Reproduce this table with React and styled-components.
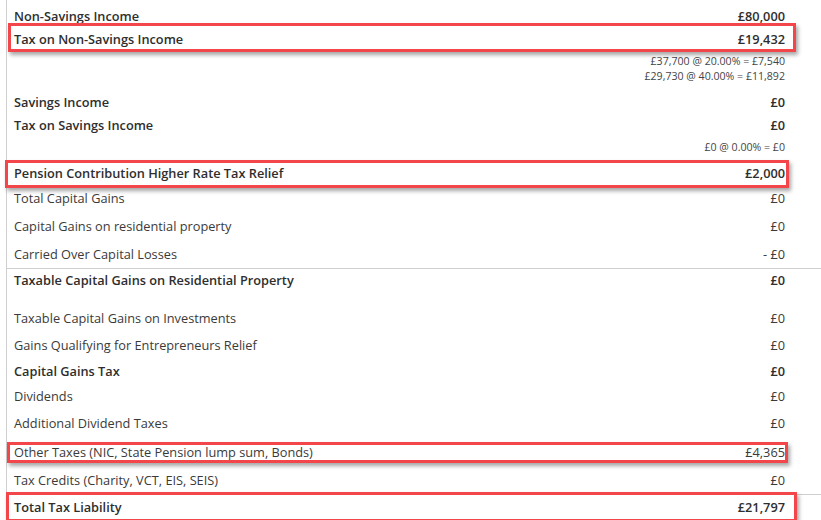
import React from "react";
import styled, { createGlobalStyle, css } from "styled-components";

const Global = createGlobalStyle`
  html, body { margin: 0; padding: 0; background: #fff; }
  body { font-family: "Open Sans", "Liberation Sans", sans-serif; color: #333; overflow: hidden; }
`;

const Panel = styled.div`
  margin-left: 6px;
  width: 815px;
  height: 520px;
  border-left: 1px solid #cfcfcf;
  box-sizing: border-box;
  padding-top: 4px;
  display: flex;
  flex-direction: column;
`;

const Row = styled.div`
  position: relative;
  display: flex;
  align-items: center;
  justify-content: space-between;
  height: ${(p) => p.$h}px;
  flex: 0 0 auto;
  padding: 0 36px 0 7px;
  box-sizing: border-box;
  font-size: 12.75px;
  font-weight: ${(p) => (p.$bold ? 600 : 400)};
  color: ${(p) => (p.$bold ? "#2e2e2e" : "#3a3a3a")};
  margin-bottom: ${(p) => p.$after || 0}px;
  ${(p) =>
    p.$divider &&
    css`
      border-top: 1px solid #cfcfcf;
    `}
  ${(p) =>
    p.$frame &&
    css`
      &::after {
        content: "";
        position: absolute;
        top: ${p.$frame[0]}px;
        right: ${p.$frame[1]}px;
        bottom: ${p.$frame[2]}px;
        left: ${p.$frame[3]}px;
        border: 3px solid #f2464a;
        box-shadow: 2px 3px 4px rgba(0, 0, 0, 0.35);
        pointer-events: none;
      }
    `}
`;

const Label = styled.span`
  white-space: nowrap;
`;

const Value = styled.span`
  white-space: nowrap;
  text-align: right;
`;

const Breakdown = styled.div`
  display: flex;
  flex-direction: column;
  align-items: flex-end;
  padding: 4px 36px 6px 7px;
  flex: 0 0 auto;
`;

const BreakLine = styled.div`
  height: 15px;
  line-height: 15px;
  font-size: 10.6px;
  color: #444;
  white-space: nowrap;
`;

const rows = [
  { label: "Non-Savings Income", value: "£80,000", bold: true, h: 23 },
  { label: "Tax on Non-Savings Income", value: "£19,432", bold: true, h: 23, frame: [-4, 25, -2, 1] },
  { breakdown: ["£37,700 @ 20.00% = £7,540", "£29,730 @ 40.00% = £11,892"] },
  { label: "Savings Income", value: "£0", bold: true, h: 23 },
  { label: "Tax on Savings Income", value: "£0", bold: true, h: 23 },
  { breakdown: ["£0 @ 0.00% = £0"] },
  { label: "Pension Contribution Higher Rate Tax Relief", value: "£2,000", bold: true, h: 23, frame: [-1, 32, -4, -2] },
  { label: "Total Capital Gains", value: "£0", h: 28 },
  { label: "Capital Gains on residential property", value: "£0", h: 28 },
  { label: "Carried Over Capital Losses", value: "- £0", h: 28 },
  { label: "Taxable Capital Gains on Residential Property", value: "£0", bold: true, h: 23, divider: true, after: 12 },
  { label: "Taxable Capital Gains on Investments", value: "£0", h: 29 },
  { label: "Gains Qualifying for Entrepreneurs Relief", value: "£0", h: 26 },
  { label: "Capital Gains Tax", value: "£0", bold: true, h: 25 },
  { label: "Dividends", value: "£0", h: 26 },
  { label: "Additional Dividend Taxes", value: "£0", h: 28 },
  { label: "Other Taxes (NIC, State Pension lump sum, Bonds)", value: "£4,365", h: 29, frame: [5, 33, 3, 0] },
  { label: "Tax Credits (Charity, VCT, EIS, SEIS)", value: "£0", h: 28 },
  { label: "Total Tax Liability", value: "£21,797", bold: true, h: 25, divider: true, frame: [-3, 24, -3, -1] },
];

export default function App() {
  return (
    <>
      <Global />
      <Panel>
        {rows.map((r, i) =>
          r.breakdown ? (
            <Breakdown key={i}>
              {r.breakdown.map((t) => (
                <BreakLine key={t}>{t}</BreakLine>
              ))}
            </Breakdown>
          ) : (
            <Row
              key={i}
              $h={r.h}
              $bold={r.bold}
              $divider={r.divider}
              $after={r.after}
              $frame={r.frame}
            >
              <Label>{r.label}</Label>
              <Value>{r.value}</Value>
            </Row>
          )
        )}
      </Panel>
    </>
  );
}
